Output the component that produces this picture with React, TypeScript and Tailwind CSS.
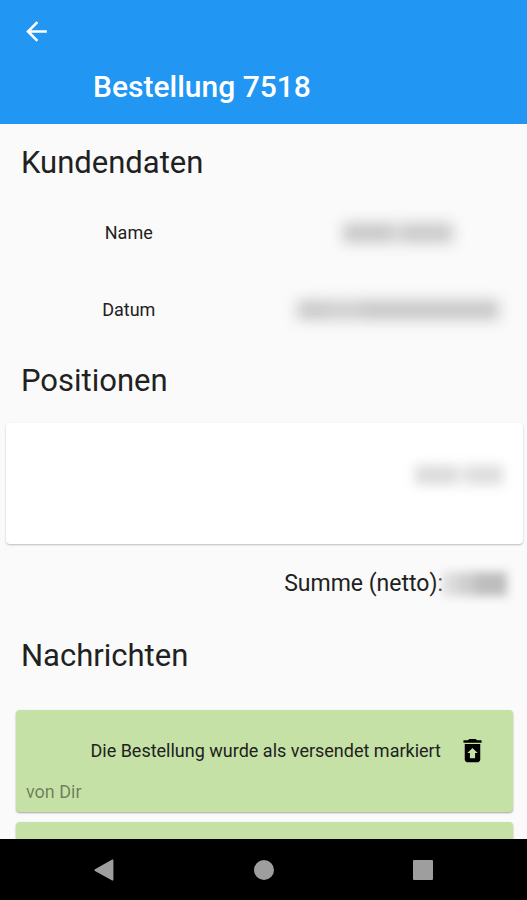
import { ReactNode } from "react";
import { MdArrowBack, MdRestoreFromTrash } from "react-icons/md";

interface Message {
  id: number;
  text: string;
  author: string;
}

const messages: Message[] = [
  { id: 1, text: "Die Bestellung wurde als versendet markiert", author: "von Dir" },
  { id: 2, text: "", author: "" },
];

function SectionTitle({ children }: { children: ReactNode }) {
  return <h2 className="px-[21px] text-[31px] leading-9">{children}</h2>;
}

function Row({ label, children }: { label: string; children: ReactNode }) {
  return (
    <div className="grid h-[77px] grid-cols-2 items-center justify-items-center gap-3">
      <dt className="text-lg leading-6">{label}</dt>
      <dd>{children}</dd>
    </div>
  );
}

function MessageCard({ message }: { message: Message }) {
  return (
    <li className="flex h-[102px] shrink-0 flex-col justify-between rounded-[4px] bg-[#c5e1a5] pt-[25px] pr-[25px] pb-2 pl-[10px] shadow-[0_1px_2px_rgba(0,0,0,0.35)]">
      {message.text && (
        <>
          <div className="flex items-center justify-end gap-4">
            <p className="text-lg leading-6">{message.text}</p>
            <button type="button" aria-label="Nachricht löschen" className="text-black">
              <MdRestoreFromTrash size={31} />
            </button>
          </div>
          <p className="text-lg leading-6 text-black/45">{message.author}</p>
        </>
      )}
    </li>
  );
}

export default function App() {
  return (
    <div className="flex h-screen flex-col overflow-hidden bg-[#fafafa] font-[Roboto,sans-serif] text-[#212121]">
      <header className="h-[124px] shrink-0 bg-[#2196f3] px-[21px] pt-4 text-white">
        <button type="button" aria-label="Zurück" className="block">
          <MdArrowBack size={31} />
        </button>
        <h1 className="mt-[22px] pl-[72px] text-[30px] leading-9 font-medium">Bestellung 7518</h1>
      </header>

      <main className="flex min-h-0 flex-1 flex-col overflow-hidden pt-[21px]">
        <SectionTitle>Kundendaten</SectionTitle>
        <dl className="mt-[13px]">
          <Row label="Name">
            <div className="flex blur-[7px]">
              <div className="h-5 w-[50px] bg-[#c8c8c8]" />
              <div className="h-5 w-2 bg-[#dedede]" />
              <div className="h-5 w-[52px] bg-[#cacaca]" />
            </div>
          </Row>
          <Row label="Datum">
            <div className="flex blur-[7px]">
              <div className="h-5 w-8 bg-[#cacaca]" />
              <div className="h-5 w-8 bg-[#d0d0d0]" />
              <div className="h-5 w-[138px] bg-[#c8c8c8]" />
            </div>
          </Row>
        </dl>

        <div className="mt-[15px]">
          <SectionTitle>Positionen</SectionTitle>
        </div>
        <section className="mt-6 mr-1 ml-[6px] flex h-[121px] shrink-0 justify-end rounded-[4px] bg-white pt-[42px] pr-5 shadow-[0_1px_2px_rgba(0,0,0,0.25)]">
          <div className="flex h-5 blur-[6px]">
            <div className="w-10 bg-[#dcdcdc]" />
            <div className="w-3 bg-[#ebebeb]" />
            <div className="w-9 bg-[#dedede]" />
          </div>
        </section>
        <div className="mt-6 flex items-center justify-end pr-5">
          <p className="text-[23px] leading-8">Summe (netto):</p>
          <div className="flex h-6 blur-[5px]">
            <div className="w-4 bg-[#dcdcdc]" />
            <div className="w-4 bg-[#cecece]" />
            <div className="w-8 bg-[#bebebe]" />
          </div>
        </div>

        <div className="mt-[38px]">
          <SectionTitle>Nachrichten</SectionTitle>
        </div>
        <ul className="mt-9 mr-[14px] ml-4 flex flex-col gap-[10px]">
          {messages.map((message) => (
            <MessageCard key={message.id} message={message} />
          ))}
        </ul>
      </main>

      <nav className="flex h-[61px] shrink-0 items-center justify-between bg-black px-[94px] text-[#9e9e9e]">
        <button type="button" aria-label="Zurück">
          <svg width="20" height="22" viewBox="0 0 20 22" fill="currentColor">
            <path d="M18.2.6 1 10.2a1 1 0 0 0 0 1.700l17.200 9.600a.8.8 0 0 0 1.200-.7V1.300a.8.8 0 0 0-1.200-.7z" />
          </svg>
        </button>
        <button type="button" aria-label="Startseite" className="size-5 rounded-full bg-current" />
        <button type="button" aria-label="Übersicht" className="size-5 rounded-[1px] bg-current" />
      </nav>
    </div>
  );
}
